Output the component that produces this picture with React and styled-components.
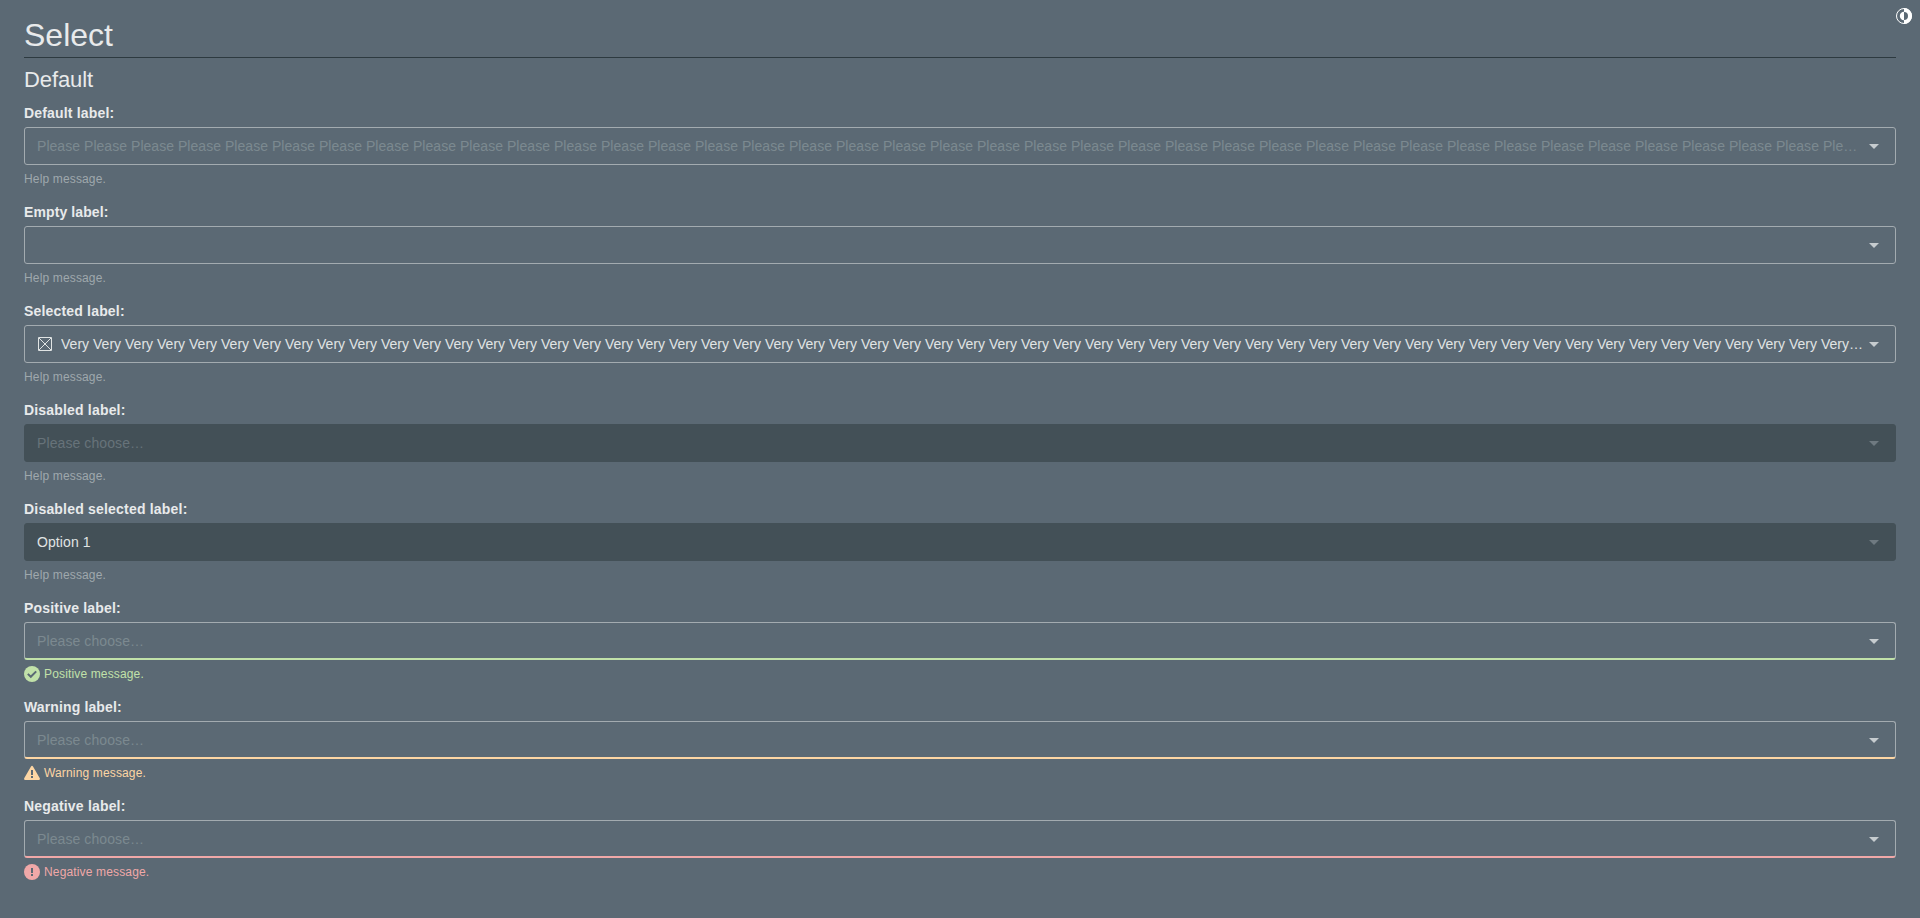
import React from 'react';
import styled, { createGlobalStyle, css } from 'styled-components';

const GlobalStyle = createGlobalStyle`
  *, *::before, *::after { box-sizing: border-box; }
  body {
    margin: 0;
    min-height: 100vh;
    background: #5b6974;
    color: #e8eaeb;
    font: 14px/20px "Liberation Sans", Arial, sans-serif;
  }
`;

const tones = { positive: '#c1e1a9', warning: '#fdd6a4', negative: '#f0a8a8' };

const Page = styled.main`
  padding: 16px 24px 0;
`;

const Title = styled.h1`
  margin: 0;
  height: 42px;
  border-bottom: 1px solid #2d3a40;
  font-size: 32px;
  font-weight: 400;
  line-height: 38px;
`;

const Subtitle = styled.h2`
  margin: 8px 0 9px;
  font-size: 22px;
  font-weight: 400;
  line-height: 28px;
  letter-spacing: -0.1px;
`;

const ThemeToggle = styled.button`
  position: absolute;
  top: 8px;
  right: 8px;
  width: 16px;
  height: 16px;
  padding: 0;
  border: 0;
  background: none;
  color: #fff;
  svg { display: block; }
`;

const Field = styled.div`
  height: 99px;
`;

const Label = styled.label`
  display: block;
  height: 24px;
  font-weight: 700;
  letter-spacing: ${({ $tracking = 0.18 }) => $tracking}px;
`;

const SelectBox = styled.div`
  display: flex;
  align-items: center;
  height: 38px;
  padding: 0 16px 0 12px;
  border: 1px solid #a3abb0;
  border-radius: 3px;
  ${({ $tone }) => $tone && css`
    padding-top: 1px;
    border-bottom: 2px solid ${tones[$tone]};
  `}
  ${({ $disabled }) => $disabled && css`
    border-color: #435057;
    background: #435057;
  `}
`;

const Value = styled.span`
  flex: 1;
  min-width: 0;
  overflow: hidden;
  white-space: nowrap;
  text-overflow: ellipsis;
  color: ${({ $placeholder, $disabled }) => ($placeholder ? ($disabled ? '#67737a' : '#7c8990') : '#e0e4e4')};
  margin-right: ${({ $placeholder }) => ($placeholder ? 11 : 4)}px;
  letter-spacing: ${({ $tracking = 0.09 }) => $tracking}px;
`;

const OptionIcon = styled.svg`
  flex: none;
  margin: 0 9px 0 1px;
`;

const Arrow = styled.svg`
  flex: none;
  color: ${({ $disabled }) => ($disabled ? '#6f7a81' : '#c6cccf')};
`;

const Message = styled.div`
  display: flex;
  align-items: center;
  gap: 4px;
  height: 16px;
  margin-top: 6px;
  font-size: 12px;
  line-height: 16px;
  letter-spacing: 0.15px;
  color: ${({ $tone }) => tones[$tone] || '#9fa8ad'};
`;

const StatusIcon = ({ tone }) => (
  <svg width="16" height="16" viewBox="0 0 16 16" fill="currentColor">
    {tone === 'warning' ? (
      <path d="M7 1.6Q8-.2 9 1.6L15.8 13.2Q16.3 15 14.8 15H1.2Q-.3 15 .2 13.2Z" />
    ) : (
      <circle cx="8" cy="8" r="8" />
    )}
    {tone === 'positive' ? (
      <path d="M3.8 7.9 6.8 10.8 12.2 5.4" fill="none" stroke="#5b6974" strokeWidth="2" />
    ) : (
      <path d={tone === 'warning' ? 'M7 5h2v5H7zM7 11h2v2H7z' : 'M7 4h2v5H7zM7 10h2v2H7z'} fill="#5b6974" />
    )}
  </svg>
);

const fields = [
  { label: 'Default', text: 'Please '.repeat(42).trim(), placeholder: true, tracking: 0.043 },
  { label: 'Empty', text: '', labelTracking: 0.1 },
  { label: 'Selected', text: 'Very '.repeat(60).trim(), icon: true, tracking: 0.019 },
  { label: 'Disabled', text: 'Please choose…', placeholder: true, disabled: true },
  { label: 'Disabled selected', text: 'Option 1', disabled: true, labelTracking: 0.2 },
  { label: 'Positive', text: 'Please choose…', placeholder: true, tone: 'positive', message: 'Positive message.' },
  { label: 'Warning', text: 'Please choose…', placeholder: true, tone: 'warning', message: 'Warning message.', labelTracking: 0.13 },
  { label: 'Negative', text: 'Please choose…', placeholder: true, tone: 'negative', message: 'Negative message.' },
];

const SelectField = ({ label, labelTracking, text, tracking, placeholder, disabled, icon, tone, message = 'Help message.' }) => (
  <Field>
    <Label $tracking={labelTracking}>{label} label:</Label>
    <SelectBox $tone={tone} $disabled={disabled}>
      {icon && (
        <OptionIcon width="14" height="14" viewBox="0 0 14 14" fill="none" stroke="#e0e4e4">
          <path d="M.5.5h13v13H.5zM1 1l12 12M13 1 1 13" />
        </OptionIcon>
      )}
      <Value $placeholder={placeholder} $disabled={disabled} $tracking={tracking}>{text}</Value>
      <Arrow $disabled={disabled} width="10" height="5" viewBox="0 0 10 5">
        <path d="M0 0h10L5 5z" fill="currentColor" />
      </Arrow>
    </SelectBox>
    <Message $tone={tone}>
      {tone && <StatusIcon tone={tone} />}
      <span>{message}</span>
    </Message>
  </Field>
);

export default function App() {
  return (
    <>
      <GlobalStyle />
      <Page>
        <Title>Select</Title>
        <Subtitle>Default</Subtitle>
        {fields.map((field) => <SelectField key={field.label} {...field} />)}
      </Page>
      <ThemeToggle aria-label="Switch theme">
        <svg width="16" height="16" viewBox="0 0 16 16">
          <circle cx="8" cy="8" r="7.5" fill="none" stroke="currentColor" />
          <path d="M8 0a8 8 0 0 1 0 16v-4a4 4 0 0 0 0-8z" fill="currentColor" />
          <path d="M8 3.8a4.2 4.2 0 0 0 0 8.4z" fill="currentColor" />
        </svg>
      </ThemeToggle>
    </>
  );
}
